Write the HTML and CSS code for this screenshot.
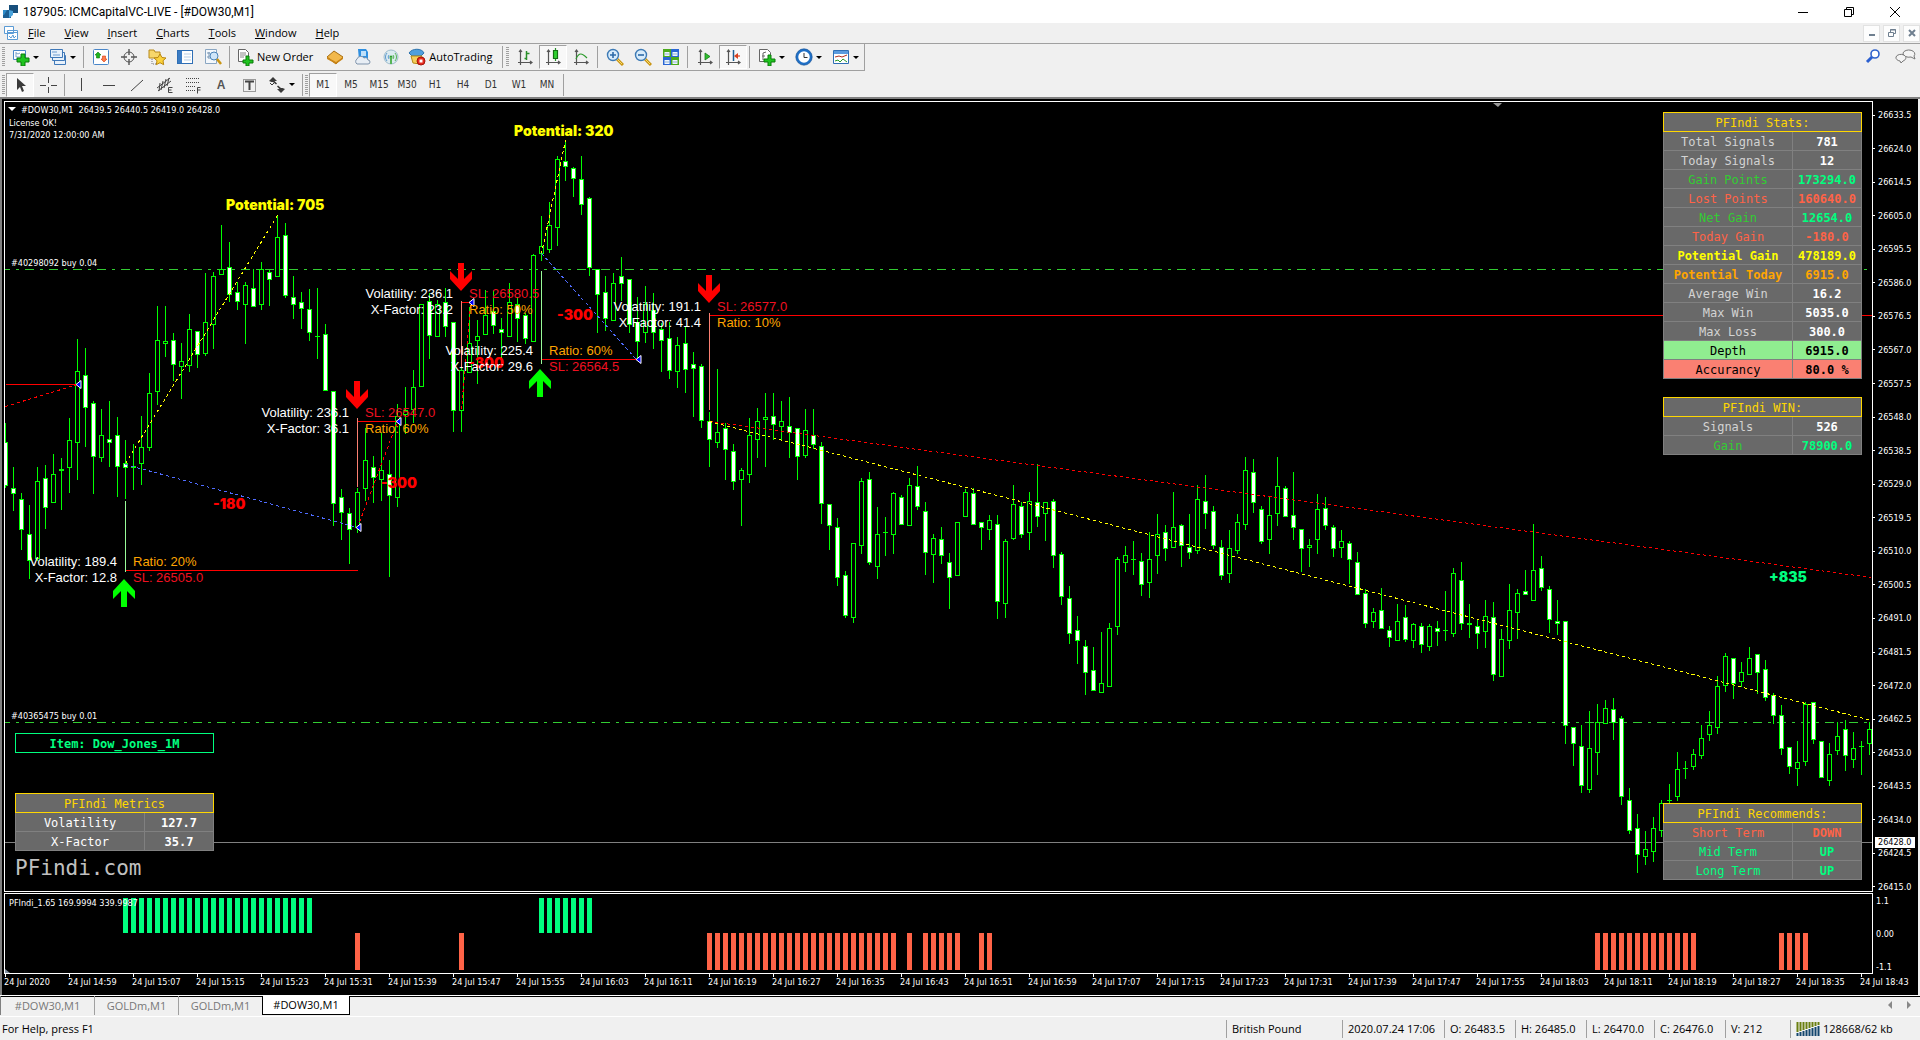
FILE: index.html
```html
<!DOCTYPE html>
<html lang="en">
<head>
<meta charset="utf-8">
<title>187905: ICMCapitalVC-LIVE - [#DOW30,M1]</title>
<link rel="stylesheet" href="styles.css">
</head>
<body>
<header class="titlebar">
  <svg class="app-icon" width="18" height="16" viewBox="0 0 18 16"><path d="M2 6h8v8H2z" fill="#1d5f93"/><path d="M8 1h9v8H8z" fill="#174f7c"/><path d="M8 6l4 1v4l-4 3z" fill="#4aa3dc"/><path d="M2 6h4l-3 5H2z" fill="#2f8cc9"/></svg>
  <h1 class="title">187905: ICMCapitalVC-LIVE - [#DOW30,M1]</h1>
  <div class="window-buttons">
    <button aria-label="Minimize"><svg width="10" height="10"><path d="M0 5.500h10" stroke="#000"/></svg></button>
    <button aria-label="Restore"><svg width="10" height="10" fill="none" stroke="#000"><path d="M.5 2.500h7v7h-7zM2.500 2.500v-2h7v7h-2"/></svg></button>
    <button aria-label="Close"><svg width="10" height="10" stroke="#000"><path d="M0 0l10 10M10 0L0 10"/></svg></button>
  </div>
</header>
<nav class="menubar">
  <svg class="doc-icon" width="14" height="14" viewBox="0 0 14 14" fill="#fff" stroke="#5b9bd5"><path d="M.5.500h9v7h-9zM3.500 4.500h10v9h-10z"/><path d="M3.500 6.500h10" /><path d="M5 10l2 2 2-3 1 3 2-2" fill="none"/></svg>
  <button><u>F</u>ile</button><button><u>V</u>iew</button><button><u>I</u>nsert</button><button><u>C</u>harts</button><button><u>T</u>ools</button><button><u>W</u>indow</button><button><u>H</u>elp</button>
  <div class="mdi-buttons">
    <button aria-label="Minimize chart"><svg width="8" height="8"><path d="M1 6h6" stroke="#6f7f8f" stroke-width="2"/></svg></button>
    <button aria-label="Restore chart"><svg width="8" height="8" fill="none" stroke="#6f7f8f"><path d="M.5 3.500h5v4h-5zM2.500 3V.5h5v4H6M2 1h6"/></svg></button>
    <button aria-label="Close chart"><svg width="8" height="8" stroke="#6f7f8f" stroke-width="2"><path d="M1 1l6 6M7 1L1 7"/></svg></button>
  </div>
</nav>
<div class="toolbars">
  <div class="toolbar standard">
    <i class="grip"></i>
    <button class="drop" aria-label="New chart"><svg class="ic" viewBox="0 0 18 18"><path d="M1.500 2.500h12v9h-12z" fill="#fff" stroke="#4a86c8"/><path d="M4 4v5h6M4 5l2 1 2-1" stroke="#7aa3cc" fill="none"/><path d="M9 6h4v4h4v4h-4v4H9v-4H5v-4h4z" fill="#1fc41f" stroke="#0a7a0a"/></svg></button>
    <button class="drop" aria-label="Profiles"><svg class="ic" viewBox="0 0 18 18" fill="#e8f1fb" stroke="#3f78b8"><path d="M5.500 7.500h11v9h-11z"/><path d="M3.500 4.500h12v8h-12z"/><path d="M1.500 1.500h12v8h-12z"/><path d="M3 4h5M4 7h7" stroke="#6b9bd0"/></svg></button>
    <i class="sep"></i>
    <button aria-label="Market Watch"><svg class="ic" viewBox="0 0 18 18"><rect x="1.500" y="1.500" width="15" height="15" rx="1" fill="#fff" stroke="#4a86c8"/><path d="M6 4l3 3H7.500v3h-3V7H3z" fill="#1eb51e" stroke="#0b7b0b" stroke-width=".6"/><path d="M12 14l3-3h-1.500V8h-3v3H9z" fill="#ff7b4a" stroke="#d33b10" stroke-width=".6"/></svg></button>
    <button aria-label="Data Window"><svg class="ic" viewBox="0 0 18 18" fill="none" stroke="#555"><circle cx="9" cy="9" r="5"/><path d="M9 1v6M9 11v6M1 9h6M11 9h6" stroke-width="1.400"/></svg></button>
    <button aria-label="Navigator"><svg class="ic" viewBox="0 0 18 18"><path d="M1 2h5l1 2h5v6H1z" fill="#f7d76a" stroke="#b88a1a"/><path d="M4 11v5h4" stroke="#777" stroke-dasharray="1 1" fill="none"/><path d="M12 6l2 3.500 4 .5-3 2.700.7 4-3.700-2-3.700 2 .7-4-3-2.700 4-.5z" fill="#fbd23c" stroke="#b98710"/></svg></button>
    <button aria-label="Terminal"><svg class="ic" viewBox="0 0 18 18"><rect x="1.500" y="2.500" width="15" height="13" fill="#fff" stroke="#2f6fb5"/><path d="M2 3h4v12H2z" fill="#3b7cc4"/><path d="M8 6h7M8 9h7M8 12h7" stroke="#b9cfe6"/></svg></button>
    <button aria-label="Strategy Tester"><svg class="ic" viewBox="0 0 18 18"><path d="M1.500 1.500h11v14h-11z" fill="#f4f8fc" stroke="#8aa6c2"/><path d="M3 5h3M3 9h2M5 4v7" stroke="#7793b0"/><circle cx="10" cy="8" r="4" fill="#cfe6fa" stroke="#4b84b8"/><path d="M13 11l4 5" stroke="#c99514" stroke-width="2.500"/></svg></button>
    <i class="sep"></i>
    <button class="wide"><svg class="ic" viewBox="0 0 18 18"><path d="M2.500 1.500h7l3 3v9h-10z" fill="#fff" stroke="#666"/><path d="M4 5h6M4 7h6M4 9h4" stroke="#888"/><path d="M10 8h3v4h4v3h-4v3h-3v-3H7v-3h3z" fill="#1fc41f" stroke="#0a7a0a"/></svg>New Order</button>
    <button aria-label="MetaEditor"><svg class="ic" viewBox="0 0 18 18"><path d="M1 9l7-6 9 6-7 7z" fill="#f2b84b" stroke="#a66d10"/><path d="M1 9l9 5 7-5v2l-7 5-9-5z" fill="#c98518"/></svg></button>
    <button aria-label="MQL5 services"><svg class="ic" viewBox="0 0 18 18"><path d="M4 1h8l2 3v8H5z" fill="#2f8fe0"/><path d="M7 3h5v5H7z" fill="#bfe0fa"/><path d="M3 16a3 3 0 010-5 4 4 0 017-1 3 3 0 014 2 2 2 0 010 4z" fill="#e8eef5" stroke="#7f93ab"/></svg></button>
    <button aria-label="Signals"><svg class="ic" viewBox="0 0 18 18" fill="none"><circle cx="9" cy="9" r="7" fill="#dcebf0" stroke="#9fbccd"/><path d="M5 13a6 6 0 010-8M7 11a3 3 0 010-4" stroke="#5d9ad0"/><path d="M13 5a6 6 0 010 8M11 7a3 3 0 010 4" stroke="#57b557"/><circle cx="9" cy="9" r="1.500" fill="#2c9a2c"/><path d="M9 9v7" stroke="#57b557" stroke-width="2"/></svg></button>
    <button class="wide"><svg class="ic" viewBox="0 0 18 18"><path d="M1 5c3-5 13-5 15 0l-3 3H4z" fill="#4f9fdd" stroke="#2d74ae"/><path d="M3 8h11l-2 8-7-1z" fill="#f5cf5a" stroke="#b48a18"/><circle cx="13" cy="13" r="4" fill="#e62b1e" stroke="#a3150c"/><path d="M11.500 11.500h3v3h-3z" fill="#fff"/></svg>AutoTrading</button>
    <i class="sep"></i><i class="grip"></i>
    <button aria-label="Bar chart"><svg class="ic" viewBox="0 0 18 18" fill="none" stroke="#555" stroke-width="1.200"><path d="M4.500 2v15M2 14.500h14M3 4l1.500-2L6 4M14 13l2 1.500-2 1.500"/><path d="M10.500 3v9M8.500 10.500h2M10.500 5.500h3" stroke="#2a8f2a" stroke-width="1.500"/></svg></button>
    <button class="pressed" aria-label="Candlesticks"><svg class="ic" viewBox="0 0 18 18" fill="none" stroke="#555" stroke-width="1.200"><path d="M4.500 2v15M2 14.500h14M3 4l1.500-2L6 4M14 13l2 1.500-2 1.500"/><path d="M11.500 0v13" stroke="#2a8f2a"/><path d="M9.500 2.500h4v8h-4z" fill="#2fd22f" stroke="#137013"/></svg></button>
    <button aria-label="Line chart"><svg class="ic" viewBox="0 0 18 18" fill="none" stroke="#555" stroke-width="1.200"><path d="M4.500 2v15M2 14.500h14M3 4l1.500-2L6 4M14 13l2 1.500-2 1.500"/><path d="M4 11c3-7 6-6 11-1" stroke="#2a9a2a"/></svg></button>
    <i class="sep"></i>
    <button aria-label="Zoom In"><svg class="ic" viewBox="0 0 18 18"><path d="M11 11l6 6" stroke="#c99514" stroke-width="3"/><path d="M11 11l5 5" stroke="#f7dc6a"/><circle cx="7" cy="7" r="5.500" fill="#d8ecfb" stroke="#3d7ab5" stroke-width="1.400"/><path d="M4 7h6M7 4v6" stroke="#2d6aa8" stroke-width="1.600"/></svg></button>
    <button aria-label="Zoom Out"><svg class="ic" viewBox="0 0 18 18"><path d="M11 11l6 6" stroke="#c99514" stroke-width="3"/><path d="M11 11l5 5" stroke="#f7dc6a"/><circle cx="7" cy="7" r="5.500" fill="#d8ecfb" stroke="#3d7ab5" stroke-width="1.400"/><path d="M4 7h6" stroke="#2d6aa8" stroke-width="1.600"/></svg></button>
    <button aria-label="Tile Windows"><svg class="ic" viewBox="0 0 18 18"><path d="M1 1h8v8H1z" fill="#4cab1e"/><path d="M9 1h8v8H9z" fill="#2a66d4"/><path d="M1 9h8v8H1z" fill="#2a66d4"/><path d="M9 9h8v8H9z" fill="#4cab1e"/><path d="M2.500 4h5v4h-5zM10.500 4h5v4h-5zM2.500 12h5v4h-5zM10.500 12h5v4h-5z" fill="#eef6ff"/><path d="M3 6h4M11 6h4M3 14h4M11 14h4" stroke="#8fb0cf"/></svg></button>
    <i class="sep"></i>
    <button aria-label="Auto Scroll"><svg class="ic" viewBox="0 0 18 18" fill="none" stroke="#555" stroke-width="1.200"><path d="M4.500 2v15M2 14.500h14M3 4l1.500-2L6 4M14 13l2 1.500-2 1.500"/><path d="M9 5l5 3.500-5 3.500z" fill="#2fbf2f" stroke="#177a17" stroke-width=".8"/></svg></button>
    <button class="pressed" aria-label="Chart Shift"><svg class="ic" viewBox="0 0 18 18" fill="none" stroke="#555" stroke-width="1.200"><path d="M4.500 2v15M2 14.500h14M3 4l1.500-2L6 4M14 13l2 1.500-2 1.500"/><path d="M9.500 2v11" stroke="#1d5f93" stroke-width="1.500"/><path d="M10 8l4-3v6z" fill="#d8411e" stroke="none"/><path d="M13 8h3" stroke="#d8411e"/></svg></button>
    <i class="sep"></i>
    <button class="drop" aria-label="Indicators"><svg class="ic" viewBox="0 0 18 18"><path d="M1.500 1.500h8l3 3v9h-11z" fill="#fff" stroke="#666"/><path d="M5 12V5l3-1M4 8h3" stroke="#666" fill="none"/><path d="M10 7h3v4h4v3h-4v4h-3v-4H6v-3h4z" fill="#1fc41f" stroke="#0a7a0a"/></svg></button>
    <button class="drop" aria-label="Periods"><svg class="ic" viewBox="0 0 18 18"><circle cx="9" cy="9" r="7" fill="#fff" stroke="#1f6fc6" stroke-width="2.500"/><circle cx="9" cy="9" r="8.200" fill="none" stroke="#164f91" stroke-width=".6"/><path d="M9 5v4.500h3.500" fill="none" stroke="#333"/></svg></button>
    <button class="drop" aria-label="Templates"><svg class="ic" viewBox="0 0 18 18"><path d="M1.500 2.500h15v13h-15z" fill="#fff" stroke="#2f6fb5"/><path d="M2 3h14v3H2z" fill="#5b9bdf"/><path d="M3 9l4-1 3 1 5-2" stroke="#b03020" fill="none"/><path d="M3 13l3-1 2 2 3-3 4 3" stroke="#2a9a2a" fill="none"/></svg></button>
  </div>
  <div class="toolbar line-studies">
    <i class="grip"></i>
    <button class="pressed" aria-label="Cursor"><svg class="ic" viewBox="0 0 18 18"><path d="M6 2v12l3-3 2 5 2-1-2-5h4z" fill="#3a3a3a"/></svg></button>
    <button aria-label="Crosshair"><svg class="ic" viewBox="0 0 18 18" stroke="#444"><path d="M9.500 1v6M9.500 11v6M1 9.500h6M12 9.500h6"/></svg></button>
    <i class="sep"></i>
    <button aria-label="Vertical line"><svg class="ic" viewBox="0 0 18 18" stroke="#444"><path d="M9.500 2v13"/></svg></button>
    <button aria-label="Horizontal line"><svg class="ic" viewBox="0 0 18 18" stroke="#444"><path d="M3 9.500h12"/></svg></button>
    <button aria-label="Trendline"><svg class="ic" viewBox="0 0 18 18" stroke="#444"><path d="M3 15L15 4"/></svg></button>
    <button aria-label="Equidistant channel"><svg class="ic" viewBox="0 0 18 18" stroke="#444" fill="none"><path d="M1 12L14 2M2 15L15 5M4 7l-1 8M7 5L5 14M10 3L8 12M13 2l-2 8"/><path d="M16.500 11.500h-4v5h4M12.500 14h3"/></svg></button>
    <button aria-label="Fibonacci retracement"><svg class="ic" viewBox="0 0 18 18" stroke="#444" fill="none"><path d="M2 2.500h14M2 6.500h14M2 10.500h9M2 14.500h9" stroke-dasharray="1 1"/><path d="M16.500 11.500h-3v6M13.500 14h3"/></svg></button>
    <button class="letter" aria-label="Text">A</button>
    <button aria-label="Text label"><svg class="ic" viewBox="0 0 18 18" stroke="#444" fill="none"><path d="M3.500 3.500h12v12h-12z" stroke-dasharray="1 1"/><path d="M5 5.500h9M9.500 5v9" stroke-width="2"/></svg></button>
    <button class="drop" aria-label="Arrows"><svg class="ic" viewBox="0 0 18 18" fill="#3a3a3a"><path d="M1 5l4-4 4 4H6.500L9 7.500 8 8.500 5 6 3.500 6z"/><path d="M17 13l-4 4-4-4h2.500L9 10.500l1-1 3 2.500 1.500 0z"/><path d="M2 7l2 2 3-3" fill="none" stroke="#3a3a3a"/></svg></button>
    <i class="sep"></i><i class="grip"></i>
    <button class="pressed period">M1</button><button class="period">M5</button><button class="period">M15</button><button class="period">M30</button><button class="period">H1</button><button class="period">H4</button><button class="period">D1</button><button class="period">W1</button><button class="period">MN</button>
    <i class="sep"></i>
  </div>
  <div class="side-tools">
    <button aria-label="Search"><svg width="16" height="16" viewBox="0 0 16 16"><path d="M7 9l-5 5" stroke="#2a5fd0" stroke-width="3"/><circle cx="10" cy="6" r="4" fill="#fff" stroke="#2f62cc" stroke-width="1.600"/></svg></button>
    <button aria-label="Chat"><svg width="22" height="16" viewBox="0 0 22 16" fill="#f4f4f4" stroke="#777"><path d="M9 5a6 4 0 1111 3l1 3-4-2a6 4 0 01-8-4z"/><path d="M2 9a5 3.500 0 117 4l-2 2-1-2a5 3.500 0 01-4-4z"/></svg></button>
  </div>
</div>
<main class="chart-window">
  <div class="chart-column">
    <section class="pane price-pane">
      <svg class="canvas" id="price-canvas" role="img" aria-label="Price chart"></svg>
      <div class="stack stack-top">
        <table class="panel">
          <caption>PFIndi Stats:</caption>
          <tr class="soft"><th>Total Signals</th><td class="bold white">781</td></tr>
          <tr class="soft"><th>Today Signals</th><td class="bold white">12</td></tr>
          <tr class="lime"><th>Gain Points</th><td class="bold spring">173294.0</td></tr>
          <tr class="tomato"><th>Lost Points</th><td class="bold">160640.0</td></tr>
          <tr class="lime"><th>Net Gain</th><td class="bold spring">12654.0</td></tr>
          <tr class="tomato"><th>Today Gain</th><td class="bold">-180.0</td></tr>
          <tr class="yellow bold"><th>Potential Gain</th><td>478189.0</td></tr>
          <tr class="orange bold"><th>Potential Today</th><td>6915.0</td></tr>
          <tr class="soft"><th>Average Win</th><td class="bold white">16.2</td></tr>
          <tr class="soft"><th>Max Win</th><td class="bold white">5035.0</td></tr>
          <tr class="soft"><th>Max Loss</th><td class="bold white">300.0</td></tr>
          <tr class="on-green"><th>Depth</th><td class="bold">6915.0</td></tr>
          <tr class="on-red"><th>Accurancy</th><td class="bold">80.0 %</td></tr>
        </table>
        <table class="panel">
          <caption>PFIndi WIN:</caption>
          <tr class="soft"><th>Signals</th><td class="bold white">526</td></tr>
          <tr class="lime"><th>Gain</th><td class="bold spring">78900.0</td></tr>
        </table>
      </div>
      <div class="stack stack-bottom">
        <table class="panel">
          <caption>PFIndi Recommends:</caption>
          <tr class="tomato"><th>Short Term</th><td class="bold">DOWN</td></tr>
          <tr class="spring"><th>Mid Term</th><td class="bold">UP</td></tr>
          <tr class="spring"><th>Long Term</th><td class="bold">UP</td></tr>
        </table>
      </div>
      <div class="stack stack-left">
        <div class="item-box">Item: Dow_Jones_1M</div>
        <table class="panel">
          <caption>PFIndi Metrics</caption>
          <tr class="white"><th>Volatility</th><td class="bold">127.7</td></tr>
          <tr class="white"><th>X-Factor</th><td class="bold">35.7</td></tr>
        </table>
        <div class="brand">PFindi.com</div>
      </div>
    </section>
    <section class="pane signal-pane">
      <svg class="canvas" id="signal-canvas" role="img" aria-label="PFIndi indicator"></svg>
    </section>
    <div class="time-axis" id="time-axis"></div>
  </div>
  <aside class="axis-column">
    <div class="price-axis" id="price-axis"></div>
    <div class="signal-axis"><span>1.1</span><span>0.00</span><span>-1.1</span></div>
    <output class="current-price">26428.0</output>
  </aside>
</main>
<div class="tabs">
  <button>#DOW30,M1</button><button>GOLDm,M1</button><button>GOLDm,M1</button><button class="active">#DOW30,M1</button>
  <div class="tab-scroll">
    <button aria-label="Previous tabs"><svg width="5" height="8"><path d="M4 0v8L0 4z" fill="#888"/></svg></button>
    <button aria-label="Next tabs"><svg width="5" height="8"><path d="M1 0v8l4-4z" fill="#888"/></svg></button>
  </div>
</div>
<footer class="statusbar">
  <span class="help">For Help, press F1</span>
  <span class="cell w-name">British Pound</span>
  <span class="cell w-date">2020.07.24 17:06</span>
  <span class="cell w-open">O: 26483.5</span>
  <span class="cell w-open">H: 26485.0</span>
  <span class="cell w-low">L: 26470.0</span>
  <span class="cell w-open">C: 26476.0</span>
  <span class="cell w-vol">V: 212</span>
  <span class="cell w-net"><svg width="24" height="14" viewBox="0 0 24 14"><path d="M1.500 0v10M4.500 0v9M7.500 0v8M10.500 0v7M13.500 0v6M16.500 0v5M19.500 0v4M22.500 0v3" stroke="#6a7f10" stroke-width="2"/><path d="M1.500 11v3M4.500 10v4M7.500 9v5M10.500 8v6M13.500 7v7M16.500 6v8M19.500 5v9M22.500 4v10" stroke="#14476e" stroke-width="2"/></svg>128668/62 kb</span>
</footer>
<script src="chart.js"></script>
</body>
</html>
```
FILE: styles.css
```css
* { box-sizing: border-box; }

body {
  margin: 0;
  height: 100vh;
  display: flex;
  flex-direction: column;
  overflow: hidden;
  background: #f0f0f0;
  color: #000;
  font: 11px/16px "Open Sans", "Noto Sans", sans-serif;
}

button {
  font: inherit;
  color: inherit;
  background: none;
  border: 0;
  padding: 0;
}

/* Title and menu */
.titlebar {
  flex: none;
  height: 23px;
  display: flex;
  align-items: center;
  background: #fff;
}
.app-icon { margin-left: 1px; }
.title { margin: 0 0 0 4px; font: 400 12px/16px Roboto, sans-serif; }
.window-buttons { margin-left: auto; display: flex; }
.window-buttons button {
  width: 46px;
  height: 22px;
  display: grid;
  place-items: center;
}
.window-buttons button:last-child { width: 48px; padding-right: 2px; }
.menubar {
  flex: none;
  height: 21px;
  display: flex;
  align-items: center;
  gap: 1px;
  padding-left: 4px;
  border-bottom: 1px solid #a0a0a0;
}
.menubar > button { padding: 0 9px; }
.mdi-buttons { margin-left: auto; display: flex; gap: 3px; }
.mdi-buttons button {
  width: 17px;
  height: 17px;
  display: grid;
  place-items: center;
  background: #fdfdfd;
  border: 1px solid #e2e2e2;
}

/* Toolbars */
.toolbars {
  flex: none;
  position: relative;
  height: 55px;
  border-bottom: 2px solid #808080;
}
.toolbar {
  display: flex;
  align-items: center;
  width: max-content;
  height: 27px;
  padding-left: 2px;
}
.standard {
  border-right: 1px solid #a0a0a0;
  border-bottom: 1px solid #a0a0a0;
}
.toolbar button {
  flex: none;
  width: 28px;
  height: 24px;
  display: flex;
  align-items: center;
  justify-content: center;
  color: #333;
}
.toolbar .wide { width: auto; padding: 0 8px 0 3px; gap: 3px; color: #000; }
.toolbar .drop { width: 37px; gap: 3px; }
.toolbar .drop::after {
  content: "";
  border: 3px solid transparent;
  border-top-color: #000;
  border-bottom: 0;
}
.toolbar .pressed {
  background: #f8f8f8;
  border: 1px solid #fff;
  border-top-color: #a0a0a0;
  border-left-color: #a0a0a0;
}
.toolbar .period { font: 10px/16px "DejaVu Sans Condensed", "DejaVu Sans", sans-serif; }
.toolbar .letter { font: bold 12px/16px "Liberation Sans", sans-serif; color: #555; }
.ic { flex: none; width: 18px; height: 18px; }
.sep { width: 1px; height: 22px; margin: 0 3px 0 2px; background: #a0a0a0; }
.line-studies .sep { margin: 0 2px; }
.grip {
  width: 3px;
  height: 20px;
  margin-right: 1px;
  background: repeating-linear-gradient(#a0a0a0 0 1px, #f0f0f0 1px 2px);
}
.standard .grip { margin-right: 2px; }
.side-tools {
  position: absolute;
  top: 4px;
  right: 4px;
  display: flex;
  gap: 13px;
}

/* Chart */
.chart-window {
  flex: 1;
  min-height: 0;
  display: flex;
  margin-right: 2px;
  padding: 2px 0 0 2px;
  background: #000;
  border-left: 2px solid #808080;
  color: #fff;
  font: 9px/14px "DejaVu Sans Condensed", "DejaVu Sans", sans-serif;
}
.chart-column {
  flex: 1;
  min-width: 0;
  display: flex;
  flex-direction: column;
}
.pane { position: relative; border: 1px solid #fff; }
.price-pane { flex: 1; min-height: 0; margin-bottom: 1px; }
.signal-pane { flex: none; height: 81px; }
.canvas {
  display: block;
  position: absolute;
  width: 100%;
  height: 100%;
}
.canvas text { fill: #fff; white-space: pre; }
.canvas .info { font: 13px "Liberation Sans", sans-serif; }
.canvas .mark { font: 900 14px Inter, sans-serif; }

.time-axis {
  flex: none;
  height: 21px;
  display: flex;
  white-space: nowrap;
}
.time-axis span { flex: 0 0 64px; padding-top: 1px; position: relative; }
.time-axis span::before {
  content: "";
  position: absolute;
  left: 1px;
  top: 0;
  width: 1px;
  height: 3px;
  background: #fff;
}

.axis-column {
  flex: none;
  width: 45px;
  position: relative;
  display: flex;
  flex-direction: column;
}
.price-axis {
  flex: 1;
  display: flex;
  flex-direction: column;
  justify-content: space-between;
  padding-top: 7px;
  margin-bottom: -2px;
}
.price-axis span { display: flex; align-items: center; gap: 3px; }
.price-axis span::before { content: ""; width: 2px; height: 1px; background: #fff; }
.signal-axis {
  flex: none;
  height: 103px;
  padding: 2px 0 21px 3px;
  display: flex;
  flex-direction: column;
  justify-content: space-between;
}
.current-price {
  position: absolute;
  right: 3px;
  bottom: 147px;
  width: 40px;
  padding-left: 3px;
  line-height: 11px;
  background: #fff;
  color: #000;
}

/* Panels over the chart */
.stack {
  position: absolute;
  display: flex;
  flex-direction: column;
  width: 199px;
  font: 12px/16px "DejaVu Sans Mono", monospace;
}
.stack-top { top: 10px; right: 10px; gap: 18px; }
.stack-bottom { right: 10px; bottom: 11px; }
.stack-left { left: 10px; bottom: 2px; }
.panel {
  width: 100%;
  table-layout: fixed;
  border-spacing: 0;
  background: #696969;
  text-align: center;
}
.panel caption {
  height: 20px;
  padding-top: 2px;
  border: 1px solid #ffd700;
  background: #696969;
  color: #ffd700;
}
.panel th,
.panel td {
  height: 19px;
  padding: 2px 0 0;
  border-right: 1px solid #808080;
  border-bottom: 1px solid #808080;
  font-weight: inherit;
}
.panel th { width: 130px; border-left: 1px solid #808080; }
.soft { color: #d3d3d3; }
.white, .soft .white { color: #fff; }
.lime { color: #32cd32; }
.spring { color: #00ff7f; }
.tomato { color: #ff6347; }
.yellow { color: #ff0; }
.orange { color: #ffa500; }
.on-green { background: #90ee90; color: #000; }
.on-red { background: #fa8072; color: #000; }
.panel .bold { font-weight: 700; }
.item-box {
  height: 20px;
  margin-bottom: 40px;
  padding-top: 2px;
  border: 1px solid #00ff7f;
  background: #000;
  color: #00ff7f;
  font-weight: 700;
  text-align: center;
}
.brand { color: #c0c0c0; font-size: 21px; line-height: 34px; padding-bottom: 4px; }

/* Tabs and status bar */
.tabs {
  flex: none;
  height: 22px;
  display: flex;
  align-items: flex-start;
  border-top: 1px solid #fff;
  border-bottom: 1px solid #fff;
  box-shadow: inset 0 1px #000;
  color: #777;
}
.tabs > button {
  width: 84px;
  height: 19px;
  border-right: 1px solid #a0a0a0;
}
.tabs > button:first-child { width: 95px; border-left: 1px solid #808080; }
.tabs > button:nth-child(3) { width: 83px; border-right: 0; }
.tabs > .active {
  width: 88px;
  background: #fff;
  border: 1px solid #000;
  border-top: 0;
  color: #000;
}
.tab-scroll { margin-left: auto; display: flex; gap: 13px; padding: 1px 9px 0 0; }
.statusbar {
  flex: none;
  height: 23px;
  display: flex;
  align-items: center;
  padding-left: 2px;
}
.help { flex: 1; }
.cell {
  display: flex;
  align-items: center;
  gap: 3px;
  height: 18px;
  padding-left: 5px;
  border-left: 1px solid #a0a0a0;
  white-space: nowrap;
}
.w-name { width: 116px; }
.w-date { width: 102px; }
.w-open { width: 71px; }
.w-low { width: 68px; }
.w-vol { width: 65px; }
.w-net { width: 130px; }
```
FILE: chart.js
```js
// Candles, eight pixels apart: high, body top, body bottom, low; a trailing 1 marks a falling bar.
const candles = `423 442 485 487 1|467 488 493 510 1|493 499 529 549 1|505 534 560 578 1|467 481 558 560|465 478 507 528 1|454 474 502 502|458 469 470 509|418 440 467 492|339 371 442 479
348 375 407 446 1|401 403 456 493 1|409 435 457 461|401 439 442 466 1|417 435 466 496 1|440 463 467 498 1|444 466 467 489 1|416 447 463 484|373 393 447 450|306 340 391 404
306 341 343 356|333 340 364 380 1|343 361 366 398|314 329 365 371|331 331 354 367 1|273 322 353 355|272 276 324 348|225 269 274 274|242 267 294 301 1|282 292 301 309 1
282 285 304 343|269 288 306 306 1|262 269 304 309|270 272 279 305 1|215 237 276 276|223 235 295 297 1|276 297 304 318 1|292 302 308 328 1|289 309 332 340 1|288 336 336 358
324 334 390 390 1|391 391 503 525 1|489 497 512 539 1|508 513 529 563 1|488 492 527 532|428 460 488 500|456 467 477 502 1|433 470 479 500|460 474 495 576 1|404 416 497 506
387 410 414 433|370 387 409 422|304 304 386 386|293 301 335 358 1|300 304 336 336|288 302 326 336 1|322 322 410 431 1|367 370 410 431|307 343 372 372|320 336 340 383
290 315 334 334|290 311 325 333 1|318 329 332 360 1|283 302 336 336|297 304 318 341 1|313 315 338 343 1|254 255 341 341|216 246 253 260|202 225 249 252|156 159 227 245
140 161 166 180 1|167 168 178 196 1|156 179 204 214 1|197 198 267 275 1|269 269 294 332 1|276 292 318 330 1|273 283 320 320|257 276 283 300 1|279 279 324 332 1|297 322 341 358 1
286 304 332 342|293 310 332 348 1|323 329 340 371 1|322 338 370 378 1|337 345 371 387|327 343 369 392 1|352 364 368 416 1|364 366 420 427 1|412 421 439 466 1|369 432 442 447
423 428 449 479 1|444 451 481 489 1|468 470 479 525|418 435 474 482|408 421 439 457|393 417 419 466|393 416 424 439 1|401 421 426 440|397 426 432 457 1|428 428 456 479 1
409 430 455 457|409 435 444 448 1|442 446 503 523 1|504 504 525 549 1|518 527 577 585 1|571 575 615 617 1|543 543 617 622|478 481 545 553|472 479 562 564 1|507 534 566 578
517 532 532 555|492 493 534 553|495 497 524 524 1|478 485 525 525|466 486 506 509 1|502 511 552 574 1|534 538 554 582|527 539 555 563 1|553 562 577 608 1|522 522 575 575
489 492 516 516|488 493 524 524 1|522 522 527 549 1|515 520 529 539|515 524 601 618 1|539 541 603 617|485 504 538 539|502 506 534 537 1|492 501 532 549|464 502 516 526 1
502 502 513 540|499 501 555 567 1|552 554 596 604 1|586 598 633 643 1|616 630 640 663 1|640 646 672 694 1|647 670 690 690 1|632 683 692 692|623 628 686 686|557 559 626 634
546 555 562 571|541 559 559 574|553 561 584 595 1|532 559 582 597|514 534 555 573|525 532 548 560 1|492 527 547 547|524 525 545 566 1|514 547 552 558 1|485 499 550 553
475 501 513 528 1|506 511 545 548 1|540 547 575 579 1|530 548 573 582|514 522 550 553|457 470 524 529|459 472 502 512 1|506 509 541 543 1|497 515 539 553|457 486 513 525
486 488 516 516 1|472 515 527 539 1|529 529 548 571 1|539 545 547 566|494 509 539 553|497 508 525 529 1|525 527 548 556 1|530 541 547 557|541 543 559 583 1|552 562 594 594 1
589 593 623 627 1|608 612 621 627|588 610 628 628 1|626 630 637 646 1|604 621 640 640|605 617 639 641 1|623 624 640 647|623 626 644 652 1|624 626 646 650|621 628 631 645 1
591 630 630 640|568 573 633 636|562 580 623 629 1|604 623 624 637|620 626 633 648 1|600 616 631 647|602 617 674 680 1|629 639 676 676|584 610 640 648|589 593 612 638
570 591 594 594 1|524 570 600 600|556 568 587 590 1|586 589 619 632 1|600 621 623 634 1|621 621 725 743 1|727 727 743 765 1|725 746 785 792 1|711 748 789 792|704 722 752 774
700 708 723 723|698 709 722 739 1|716 718 796 804 1|788 800 830 833 1|814 828 854 872 1|831 849 856 864|817 828 851 861|800 803 830 836|784 800 800 803|752 769 796 800
761 768 768 778|749 754 766 769|725 738 755 758|711 725 734 740|676 686 727 733|653 656 685 691|658 658 683 698 1|662 672 681 686|647 658 674 674|654 654 672 693 1
660 669 697 700 1|693 695 715 723 1|705 715 748 754 1|747 747 766 773 1|741 762 768 785|702 704 761 765|702 702 739 743 1|741 741 777 777 1|743 754 780 785|722 736 750 754
720 729 755 770 1|732 748 759 767|741 746 746 774|722 729 743 754`;

const STEP = 8, LEFT = 5, WIDE = 4000;
const barX = i => LEFT + i * STEP;

const rect = (x, y, w, h, fill) => `<rect x="${x}" y="${y}" width="${w}" height="${h}" fill="${fill}"/>`;
const line = (x1, y1, x2, y2, color, dash = '') =>
  `<path d="M${x1 + .5} ${y1 + .5}L${x2 + .5} ${y2 + .5}" stroke="${color}" stroke-dasharray="${dash}" fill="none"/>`;
const text = (x, y, value, cls = '', color = '#fff', anchor = 'start') =>
  `<text x="${x}" y="${y}" class="${cls}" style="fill:${color}" text-anchor="${anchor}">${value}</text>`;

const drawCandle = (row, i) => {
  const [high, top, bottom, low, falling] = row.trim().split(' ').map(Number);
  const x = barX(i), green = '#00ff00';
  let out = rect(x, high, 1, low - high + 1, green) + rect(x - 2, top, 5, bottom - top + 1, green);
  if (bottom - top > 1) out += rect(x - 1, top + 1, 3, bottom - top - 1, falling ? '#fff' : '#000');
  return out;
};

const drawArrow = (x, y, up) => {
  const s = up ? -1 : 1;
  const pts = [[-3, -28], [3, -28], [3, -12], [11, -20], [11, -12], [0, 0], [-11, -12], [-11, -20], [-3, -12]];
  return `<polygon points="${pts.map(([a, b]) => [x + a, y + b * s]).join(' ')}" fill="${up ? '#00ff00' : '#ff0000'}"/>`;
};

// Signals: right edge and baseline of the metrics, left edge of the levels.
const signals = [
  [117, 566, 133, '189.4', '12.8', '26505.0', '20%', 1],
  [349, 417, 365, '236.1', '36.1', '26547.0', '60%', 0],
  [453, 298, 469, '236.1', '23.2', '26580.5', '50%', 0],
  [533, 355, 549, '225.4', '29.6', '26564.5', '60%', 1],
  [701, 311, 717, '191.1', '41.4', '26577.0', '10%', 0]
];
const drawSignal = ([right, y, left, vol, factor, sl, ratio, buy]) => {
  const slY = buy ? y + 16 : y, ratioY = buy ? y : y + 16;
  return text(right, y, `Volatility: ${vol}`, 'info', '#fff', 'end') +
    text(right, y + 16, `X-Factor: ${factor}`, 'info', '#fff', 'end') +
    text(left, slY, `SL: ${sl}`, 'info', '#f01020') +
    text(left, ratioY, `Ratio: ${ratio}`, 'info', '#ffa500');
};

const red = '#ff0000', yellow = '#ffff00', blue = '#4f6bff', salmon = '#fa8072', pale = '#98fb98';
const dot = '3 3', dashDot = '9 6 3 6';
const price =
  '<g shape-rendering="crispEdges">' +
  line(0, 269, WIDE, 269, '#32cd32', dashDot) + line(0, 722, WIDE, 722, '#32cd32', dashDot) +
  line(0, 842, WIDE, 842, '#808080') + line(709, 315, WIDE, 315, red) +
  candles.split(/[|\n]/).map(drawCandle).join('') +
  line(5, 384, 77, 384, red) + line(125, 570, 357, 570, red) + line(357, 421, 397, 421, red) +
  line(461, 302, 470, 302, red) + line(541, 359, 636, 359, red) +
  line(125, 500, 125, 571, pale) + line(541, 270, 541, 363, pale) +
  line(357, 417, 357, 486, salmon) + line(461, 300, 461, 367, salmon) + line(709, 312, 709, 409, salmon) +
  line(5, 406, 77, 384, red, dot) + line(357, 527, 397, 421, red, dot) + line(461, 409, 470, 302, red, dot) +
  line(709, 421, 1871, 577, red, dot) +
  line(125, 463, 277, 215, yellow, dot) + line(541, 253, 565, 140, yellow, dot) + line(709, 421, 1871, 720, yellow, dot) +
  line(125, 464, 357, 527, blue, dot) + line(541, 253, 636, 359, blue, dot) + '</g>' +
  [[76, 384], [356, 527], [396, 421], [469, 302], [636, 359]].map(([x, y]) =>
    `<path d="M${x} ${y + .5}l5 -4v8z" fill="#00f" stroke="#fff"/>`).join('') +
  drawArrow(357, 409) + drawArrow(461, 291) + drawArrow(709, 303) +
  drawArrow(124, 579, 1) + drawArrow(540, 369, 1) +
  text(226, 210, 'Potential: 705', 'mark', yellow) + text(514, 136, 'Potential: 320', 'mark', yellow) +
  text(213, 509, '-180', 'mark', red) + text(381, 488, '-300', 'mark', red) +
  text(557, 320, '-300', 'mark', red) + text(468, 368, '-300', 'mark', red) +
  text(1769, 582, '+835', 'mark', '#00ff7f') +
  signals.map(drawSignal).join('') +
  '<path d="M8 107h8l-4 4z" fill="#fff"/><path d="M1493 103h9l-4 4z" fill="#999"/>' +
  text(21, 113, '#DOW30,M1  26439.5 26440.5 26419.0 26428.0') +
  text(9, 126, 'License OK!') + text(9, 138, '7/31/2020 12:00:00 AM') +
  text(11, 266, '#40298092 buy 0.04') + text(11, 719, '#40365475 buy 0.01');
document.getElementById('price-canvas').innerHTML = `<g transform="translate(-5 -102)">${price}</g>`;

// Indicator histogram: first and last bar of each run.
const runs = [[15, 38, 1], [67, 73, 1], [44, 44], [57, 57], [88, 111], [113, 113], [115, 119], [122, 123], [199, 211], [222, 225]];
let bars = '';
for (const [from, to, up] of runs)
  for (let i = from; i <= to; i++)
    bars += up ? rect(barX(i) - 7, 4, 5, 35, '#00ff7f') : rect(barX(i) - 7, 39, 5, 37, '#ff6347');
document.getElementById('signal-canvas').innerHTML =
  bars + text(4, 12, 'PFIndi_1.65 169.9994 339.9987') + '<path d="M0 75l5 4H0z" fill="#8090a0"/>';

const labels = (n, fn) => Array.from({ length: n }, (_, i) => `<span>${fn(i)}</span>`).join('');
document.getElementById('price-axis').innerHTML = labels(24, i => (26633.5 - 9.5 * i).toFixed(1));
document.getElementById('time-axis').innerHTML = labels(30, i => {
  if (!i) return '24 Jul 2020';
  const m = 14 * 60 + 51 + i * 8;
  return `24 Jul ${Math.floor(m / 60)}:${String(m % 60).padStart(2, '0')}`;
});
```
